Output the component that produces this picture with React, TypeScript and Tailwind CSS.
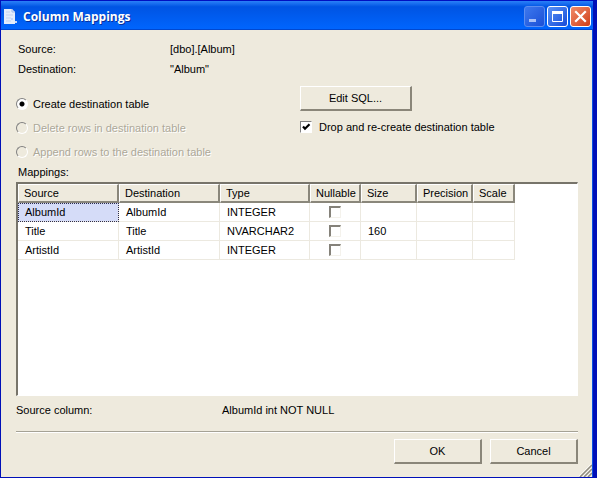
import { useState } from "react"
import clsx from "clsx"

const modes = [
  { id: "create", label: "Create destination table", disabled: false },
  { id: "delete", label: "Delete rows in destination table", disabled: true },
  { id: "append", label: "Append rows to the destination table", disabled: true },
]

const columns = [
  { name: "Source", width: "w-[101px]" },
  { name: "Destination", width: "w-[101px]" },
  { name: "Type", width: "w-[90px]" },
  { name: "Nullable", width: "w-[51px]" },
  { name: "Size", width: "w-[56px]" },
  { name: "Precision", width: "w-[56px]" },
  { name: "Scale", width: "w-[42px]" },
]

const rows = [
  { source: "AlbumId", destination: "AlbumId", type: "INTEGER", size: "" },
  { source: "Title", destination: "Title", type: "NVARCHAR2", size: "160" },
  { source: "ArtistId", destination: "ArtistId", type: "INTEGER", size: "" },
]

const sunken = "appearance-none border border-t-[#808080] border-l-[#808080] border-r-white border-b-white"

function PushButton({ children, className }: { children: React.ReactNode; className: string }) {
  return (
    <button
      type="button"
      className={clsx(
        "h-[25px] border-t border-l border-r-2 border-b-2 border-t-white border-l-white border-r-[#8a8679] border-b-[#8a8679] bg-[#eeeadd] text-center",
        className
      )}
    >
      {children}
    </button>
  )
}

function TitleBar() {
  const control = "flex size-[21px] items-center justify-center rounded-[3px] border"
  return (
    <header className="flex h-[30px] shrink-0 items-center border-t border-[#0010c0] bg-linear-to-b from-[#2a80f8] via-[#0054e3] via-20% to-[#0066ff] px-[2px] pt-[2px] shadow-[inset_0_-1px_0_#0048d0]">
      <svg className="h-4 w-4" viewBox="0 0 16 16" aria-hidden="true">
        <path d="M1 0h8l3 3v12H1z" fill="#e4ecfb" />
        <path d="M9 0v3h3" fill="none" stroke="#9db9ea" />
        <path d="M3 3h4M3 6h7M3 9h5M3 12h5" stroke="#c3d2f0" />
        <path d="M8 9h2v2H8zM12 12h2v2h-2z" fill="#c4d6f7" />
      </svg>
      <h1 className="ml-1 flex-1 font-['Open_Sans','Noto_Sans',sans-serif] text-[12px] leading-5 font-bold text-white [text-shadow:1px_1px_0_#0a2f9a]">
        Column Mappings
      </h1>
      <div className="flex gap-[2px]">
        <button type="button" aria-label="Minimize" className={clsx(control, "border-[#5c8df0] bg-linear-to-br from-[#3d78ee] to-[#1c4fd6]")}>
          <svg className="size-[19px]" viewBox="0 0 19 19">
            <path d="M4 12h7v3H4z" fill="#a9c1f7" />
          </svg>
        </button>
        <button type="button" aria-label="Maximize" className={clsx(control, "border-white bg-linear-to-br from-[#5b92f5] to-[#1748d8]")}>
          <svg className="size-[19px]" viewBox="0 0 19 19">
            <path d="M4.5 5v9.5h10V5" fill="none" stroke="#fff" />
            <path d="M4 4h11v3H4z" fill="#fff" />
          </svg>
        </button>
        <button type="button" aria-label="Close" className={clsx(control, "border-white bg-linear-to-br from-[#f08a68] to-[#d03c10]")}>
          <svg className="size-[19px]" viewBox="0 0 19 19">
            <path d="M5 5l9 9M14 5l-9 9" stroke="#fff" strokeWidth="2.2" strokeLinecap="square" />
          </svg>
        </button>
      </div>
    </header>
  )
}

function MappingsTable() {
  const cell = "border-r border-b border-[#ece9e0] px-[7px] font-normal"
  return (
    <div className="flex-1 overflow-hidden border-t-2 border-l-2 border-r border-b border-t-[#77746a] border-l-[#77746a] border-r-white border-b-white bg-white">
      <table className="w-[497px] table-fixed border-separate border-spacing-0 text-left" aria-label="Mappings">
        <thead>
          <tr className="h-[19px]">
            {columns.map((c) => (
              <th
                key={c.name}
                scope="col"
                className={clsx(
                  "border-t border-l border-r-2 border-b-2 border-t-white border-l-white border-r-[#8a877b] border-b-[#8a877b] bg-[#eeeadd] p-0 pl-[5px] leading-4 font-normal",
                  c.width
                )}
              >
                {c.name}
              </th>
            ))}
          </tr>
        </thead>
        <tbody>
          {rows.map((r, i) => (
            <tr key={r.source} className="h-[19px]">
              <td className={clsx(cell, i === 0 && "bg-[#d5dcf8] outline-1 -outline-offset-1 outline-dotted outline-[#2c2c50]")}>
                {r.source}
              </td>
              <td className={cell}>{r.destination}</td>
              <td className={cell}>{r.type}</td>
              <td className={cell}>
                <input
                  type="checkbox"
                  aria-label={`${r.source} nullable`}
                  className="mx-auto block size-3 appearance-none border-t-2 border-l-2 border-r border-b border-t-[#85827a] border-l-[#85827a] border-r-[#f4f2ec] border-b-[#f4f2ec]"
                />
              </td>
              <td className={cell}>{r.size}</td>
              <td className={cell} />
              <td className={cell} />
            </tr>
          ))}
        </tbody>
      </table>
    </div>
  )
}

export default function App() {
  const [mode, setMode] = useState("create")
  const [recreate, setRecreate] = useState(true)

  return (
    <div className="relative flex min-h-screen flex-col border-r-4 border-b border-l border-[#0010b8] bg-[#eeeadd] font-['Liberation_Sans',Arial,sans-serif] text-[11px] leading-4 text-black">
      <TitleBar />

      <main className="flex flex-1 flex-col border-r border-[#0a50e0] pr-[14px] pb-[13px] pl-[15px]">
        <dl className="grid grid-cols-[152px_1fr] gap-y-1 pt-[11px] pl-[2px]">
          <dt>Source:</dt>
          <dd>[dbo].[Album]</dd>
          <dt>Destination:</dt>
          <dd>"Album"</dd>
        </dl>

        <div className="grid grid-cols-[284px_1fr] pt-[9px]">
          <fieldset className="flex flex-col gap-2 pt-[10px]">
            {modes.map((m) => (
              <label
                key={m.id}
                className={clsx("flex items-center gap-[5px]", m.disabled && "text-[#aca899] [text-shadow:1px_1px_0_#fff]")}
              >
                <input
                  type="radio"
                  name="mode"
                  checked={mode === m.id}
                  disabled={m.disabled}
                  onChange={() => setMode(m.id)}
                  className={clsx(
                    sunken,
                    "size-3 rounded-full checked:bg-white checked:bg-[radial-gradient(circle,#000_2px,transparent_3px)]"
                  )}
                />
                {m.label}
              </label>
            ))}
          </fieldset>

          <div>
            <PushButton className="w-[112px]">Edit SQL...</PushButton>
            <label className="mt-2 flex items-center gap-[7px]">
              <span className="relative size-3">
                <input
                  type="checkbox"
                  checked={recreate}
                  onChange={(e) => setRecreate(e.target.checked)}
                  className={clsx(sunken, "peer block size-3 bg-white")}
                />
                <svg className="pointer-events-none absolute inset-0 hidden size-3 peer-checked:block" viewBox="0 0 12 12">
                  <path d="M3 5.5l2 2.2 4.500-4.500" fill="none" stroke="#000" strokeWidth="2.2" />
                </svg>
              </span>
              Drop and re-create destination table
            </label>
          </div>
        </div>

        <h2 className="pt-1 pb-[2px] pl-[2px]">Mappings:</h2>
        <MappingsTable />

        <dl className="grid grid-cols-[206px_1fr] pt-[6px] pb-[13px]">
          <dt>Source column:</dt>
          <dd>AlbumId int NOT NULL</dd>
        </dl>

        <footer className="flex justify-end gap-2 border-t border-[#a5a295] pt-[7px] shadow-[inset_0_1px_0_#fff]">
          <PushButton className="w-[88px]">OK</PushButton>
          <PushButton className="w-[88px]">Cancel</PushButton>
        </footer>
      </main>

      <svg className="absolute right-px bottom-0 size-[13px]" viewBox="0 0 13 13" aria-hidden="true">
        <path d="M1 13L13 1M5 13l8-8M9 13l4-4" stroke="#8f8c80" strokeWidth="1.500" />
        <path d="M0 12L12 0M4 12l8-8M8 12l4-4" stroke="#fff" strokeWidth="0.700" />
      </svg>
    </div>
  )
}
